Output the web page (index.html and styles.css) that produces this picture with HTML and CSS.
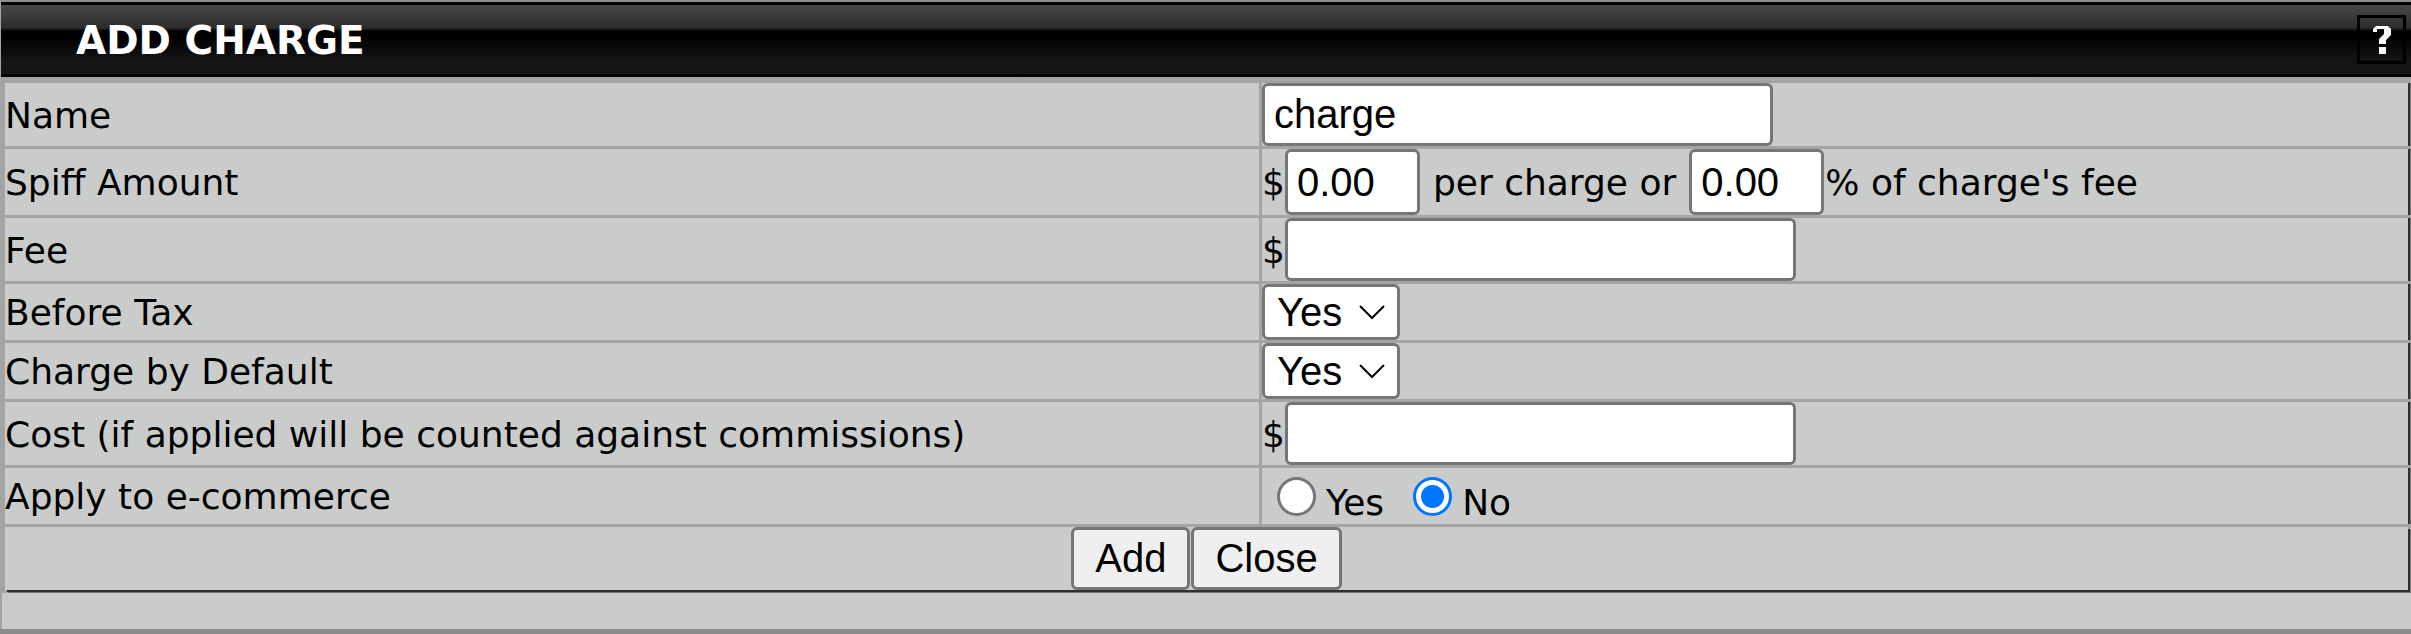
FILE: index.html
```html
<!DOCTYPE html>
<html lang="en">
<head>
  <meta charset="UTF-8" />
  <meta name="viewport" content="width=device-width, initial-scale=1.0" />
  <title>Add Charge</title>
  <link rel="stylesheet" href="styles.css">
</head>
<body>

<div class="window">
  <div class="title-bar">
    <h1>ADD CHARGE</h1>
    <button type="button" class="help" aria-label="Help">
      <svg viewBox="0 0 20 30" width="20" height="30" fill="#fff">
        <path d="M4 1H16L19 4V10L14 15V19H7V14L12 9V4H5V7H1V4Z" />
        <path d="M7 22H14V29H7Z" />
      </svg>
    </button>
  </div>

  <form id="charge-form">
    <table class="fields">
      <tr>
        <td class="name"><label for="name">Name</label></td>
        <td><div class="row"><input type="text" id="name" class="wide" value="charge" /></div></td>
      </tr>
      <tr>
        <td class="name"><label for="spiff">Spiff Amount</label></td>
        <td>
          <div class="row">
            <span>$</span><input type="text" id="spiff" class="amount" value="0.00" />
            <label for="spiff-percent" class="between">per charge or</label>
            <input type="text" id="spiff-percent" class="amount" value="0.00" /><span class="after">% of charge's fee</span>
          </div>
        </td>
      </tr>
      <tr>
        <td class="name"><label for="fee">Fee</label></td>
        <td><div class="row"><span>$</span><input type="text" id="fee" class="wide" /></div></td>
      </tr>
      <tr>
        <td class="name"><label for="before-tax">Before Tax</label></td>
        <td>
          <div class="row select">
            <select id="before-tax"><option>Yes</option><option>No</option></select>
            <svg class="arrow" viewBox="0 0 26 15" width="26" height="15"><path d="M1 1L13 13L25 1" /></svg>
          </div>
        </td>
      </tr>
      <tr>
        <td class="name"><label for="by-default">Charge by Default</label></td>
        <td>
          <div class="row select">
            <select id="by-default"><option>Yes</option><option>No</option></select>
            <svg class="arrow" viewBox="0 0 26 15" width="26" height="15"><path d="M1 1L13 13L25 1" /></svg>
          </div>
        </td>
      </tr>
      <tr>
        <td class="name"><label for="cost">Cost (if applied will be counted against commissions)</label></td>
        <td><div class="row"><span>$</span><input type="text" id="cost" class="wide" /></div></td>
      </tr>
      <tr>
        <td class="name">Apply to e-commerce</td>
        <td>
          <div class="row radios">
            <input type="radio" name="ecommerce" id="ecommerce-yes" /><label for="ecommerce-yes">Yes</label>
            <input type="radio" name="ecommerce" id="ecommerce-no" checked /><label for="ecommerce-no">No</label>
          </div>
        </td>
      </tr>
      <tr>
        <td colspan="2">
          <div class="row buttons">
            <button type="button">Add</button>
            <button type="button">Close</button>
          </div>
        </td>
      </tr>
    </table>
  </form>

  <div class="footer"></div>
</div>

</body>
</html>
```
FILE: styles.css
```css
* {
  margin: 0;
  padding: 0;
  box-sizing: border-box;
}

body {
  background: #8c8c8c;
  color: #000;
  font-family: Verdana, "DejaVu Sans", sans-serif;
  font-size: 36px;
  line-height: 44px;
  padding-top: 2px;
}

.window {
  background: #a4a4a4;
}

/* Title bar */
.title-bar {
  display: flex;
  align-items: center;
  justify-content: space-between;
  height: 75px;
  margin-left: 1px;
  padding: 0 5px 0 75px;
  border-top: 3px solid #000;
  border-bottom: 3px solid #000;
  background: linear-gradient(#484848, #2c2c2c 33%, #000 38%, #000 46%, #141414 80%, #161616);
}

h1 {
  padding-top: 2px;
  color: #fff;
  font-size: 39px;
}

.help {
  display: flex;
  align-items: center;
  justify-content: center;
  width: 49px;
  height: 49px;
  border: 3px solid #000;
  background: transparent;
}

/* Form */
form {
  padding: 3px 0 0 2px;
}

.fields {
  width: 100%;
  table-layout: fixed;
  border-spacing: 3px;
}

td {
  height: 56px;
  background: #cacccb;
  vertical-align: middle;
}

td:last-child {
  box-shadow: 2px 0 #2e2e2e, 3px 0 #747474;
}

tr:last-child td {
  box-shadow: 2px 2px #2e2e2e, 3px 3px #747474;
}

.name {
  width: 52.25%;
  padding-top: 2px;
}

.row {
  display: flex;
  align-items: center;
}

.row span,
.between {
  padding-top: 2px;
}

input,
select,
.buttons button {
  font-family: Arial, "Liberation Sans", sans-serif;
  font-size: 40px;
  color: #000;
  background: #fff;
  border: 3px solid #767676;
  border-radius: 6px;
}

input[type="text"] {
  height: 63px;
  padding: 0 9px;
}

input.wide {
  width: 511px;
}

input[type="text"].amount {
  width: 135px;
  height: 66px;
}

.between {
  margin: 0 13px;
}

.after {
  margin-left: 1px;
}

.select {
  display: inline-flex;
  position: relative;
  vertical-align: top;
}

select {
  appearance: none;
  width: 138px;
  height: 56px;
  padding-left: 12px;
}

.arrow {
  position: absolute;
  right: 15px;
  fill: none;
  stroke: #000;
  stroke-width: 2;
  pointer-events: none;
}

.radios {
  padding-left: 15px;
}

.radios label {
  margin: 14px 29px 0 10px;
  line-height: 36px;
}

input[type="radio"] {
  appearance: none;
  width: 39px;
  height: 39px;
  border-radius: 50%;
}

input[type="radio"]:checked {
  border-color: #0075ff;
  background: radial-gradient(circle, #0075ff 11px, #fff 12px);
}

.buttons {
  justify-content: center;
  gap: 1px;
}

.buttons button {
  height: 63px;
  padding: 0 21px;
  background: #efefef;
}

.footer {
  height: 36px;
  margin-left: 2px;
  background: #cacccb;
}
```
